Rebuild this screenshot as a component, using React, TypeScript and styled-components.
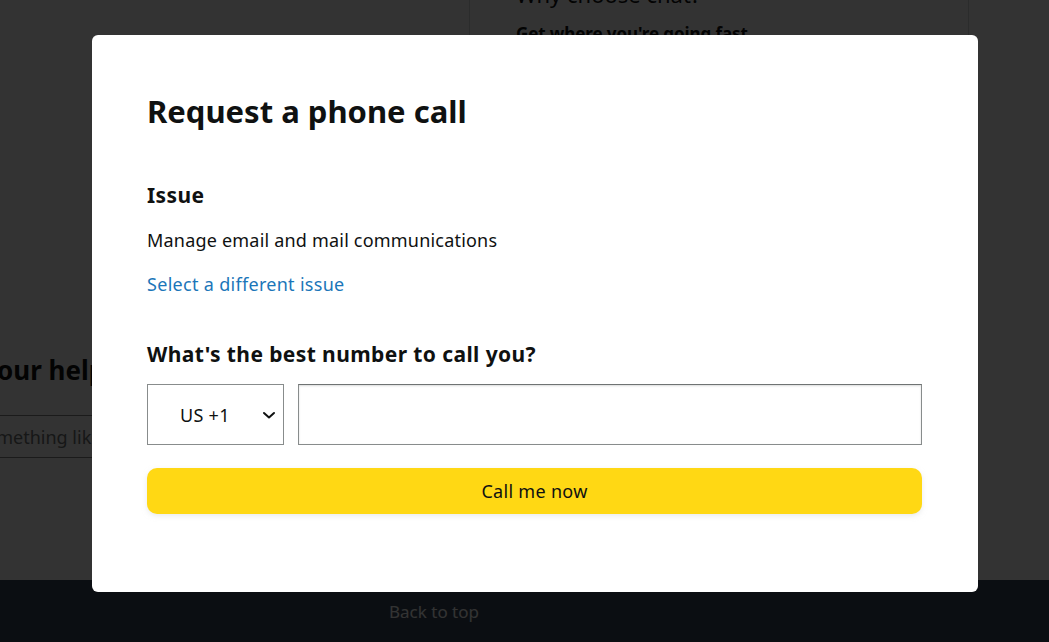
import React from 'react';
import styled, { createGlobalStyle } from 'styled-components';

const GlobalStyle = createGlobalStyle`
  html, body {
    margin: 0;
    padding: 0;
    background: #fff;
    font-family: "Noto Sans", "Open Sans", Arial, sans-serif;
    color: #0f1111;
    overflow: hidden;
  }
`;

const Page = styled.div`
  width: 1049px;
  height: 642px;
  display: flex;
  flex-direction: column;
`;

const Main = styled.div`
  height: 580px;
  display: grid;
  grid-template-columns: 469px 500px 1fr;
  overflow: hidden;
`;

const HelpColumn = styled.div`
  padding-top: 352px;
`;

const HelpHeading = styled.h2`
  margin: 0 0 0 -3px;
  font-size: 26px;
  font-weight: 700;
  white-space: nowrap;
  line-height: 36px;
`;

const SearchBox = styled.div`
  margin-top: 27px;
  height: 41px;
  border-top: 1px solid #888;
  border-bottom: 1px solid #888;
  display: flex;
  align-items: center;
  font-size: 18px;
  color: #6f7373;
  white-space: nowrap;
  text-indent: -68px;
`;

const ChatCard = styled.div`
  border-left: 1px solid #d5d9d9;
  border-right: 1px solid #d5d9d9;
  padding: 0 46px;
  margin-top: -20px;
`;

const ChatTitle = styled.div`
  font-size: 22px;
  line-height: 28px;
`;

const ChatPoint = styled.div`
  margin-top: 14px;
  font-size: 17px;
  font-weight: 700;
  letter-spacing: -0.1px;
`;

const Footer = styled.div`
  flex: 1;
  background: #37475a;
  color: #fff;
  font-size: 17px;
  display: flex;
  align-items: center;
  padding-left: 389px;
`;

const Overlay = styled.div`
  position: fixed;
  inset: 0;
  background: rgba(0, 0, 0, 0.8);
`;

const Modal = styled.div`
  position: fixed;
  top: 35px;
  left: 92px;
  width: 886px;
  height: 557px;
  box-sizing: border-box;
  background: #fff;
  border-radius: 6px;
  padding: 56px 56px 0 55px;
`;

const Title = styled.h1`
  margin: 0;
  font-size: 31px;
  line-height: 40px;
  font-weight: 700;
`;

const Section = styled.div<{ $top: number }>`
  margin-top: ${p => p.$top}px;
`;

const Label = styled.h3`
  margin: 0;
  font-size: 21px;
  line-height: 28px;
  font-weight: 700;
  letter-spacing: 0.4px;
`;

const Body = styled.p`
  margin: 19px 0 0;
  font-size: 18px;
  line-height: 24px;
  letter-spacing: 0.2px;
`;

const Link = styled.a`
  display: block;
  margin-top: 20px;
  font-size: 18px;
  line-height: 24px;
  letter-spacing: 0.3px;
  color: #1b76b9;
  text-decoration: none;
`;

const FieldRow = styled.div`
  display: flex;
  gap: 14px;
  margin-top: 16px;
`;

const CountrySelect = styled.div`
  width: 137px;
  height: 61px;
  box-sizing: border-box;
  border: 1px solid #888c8c;
  display: flex;
  align-items: center;
  padding: 0 7px 0 32px;
  font-size: 18px;
  letter-spacing: 0.3px;
  justify-content: space-between;
`;

const PhoneInput = styled.input`
  flex: 1;
  height: 61px;
  box-sizing: border-box;
  border: 1px solid #888c8c;
  border-top-color: #6f7373;
  box-shadow: 0 1px 2px rgba(15, 17, 17, 0.15) inset;
  outline: none;
  font-size: 18px;
  padding: 0 12px;
`;

const CallButton = styled.button`
  display: block;
  width: 100%;
  height: 46px;
  margin-top: 23px;
  border: none;
  border-radius: 10px;
  background: #ffd814;
  box-shadow: 0 2px 5px 0 rgba(213, 217, 217, 0.5);
  font-family: inherit;
  font-size: 18px;
  letter-spacing: 0.3px;
  color: #0f1111;
  cursor: pointer;
`;

const Chevron = () => (
  <svg width="14" height="10" viewBox="0 0 14 10">
    <path d="M2 3l5 4.5 5-4.5" fill="none" stroke="#0f1111" strokeWidth="2" strokeLinecap="round" strokeLinejoin="round" />
  </svg>
);

export default function App() {
  return (
    <>
      <GlobalStyle />
      <Page>
        <Main>
          <HelpColumn>
            <HelpHeading>our help library</HelpHeading>
            <SearchBox>Type something like, "question about a charge"</SearchBox>
          </HelpColumn>
          <ChatCard>
            <ChatTitle>Why choose chat?</ChatTitle>
            <ChatPoint>Get where you're going fast</ChatPoint>
          </ChatCard>
          <div />
        </Main>
        <Footer>Back to top</Footer>
      </Page>
      <Overlay />
      <Modal>
        <Title>Request a phone call</Title>
        <Section $top={50}>
          <Label>Issue</Label>
          <Body>Manage email and mail communications</Body>
          <Link href="#">Select a different issue</Link>
        </Section>
        <Section $top={44}>
          <Label>What's the best number to call you?</Label>
          <FieldRow>
            <CountrySelect>
              <span>US +1</span>
              <Chevron />
            </CountrySelect>
            <PhoneInput type="tel" />
          </FieldRow>
          <CallButton>Call me now</CallButton>
        </Section>
      </Modal>
    </>
  );
}
